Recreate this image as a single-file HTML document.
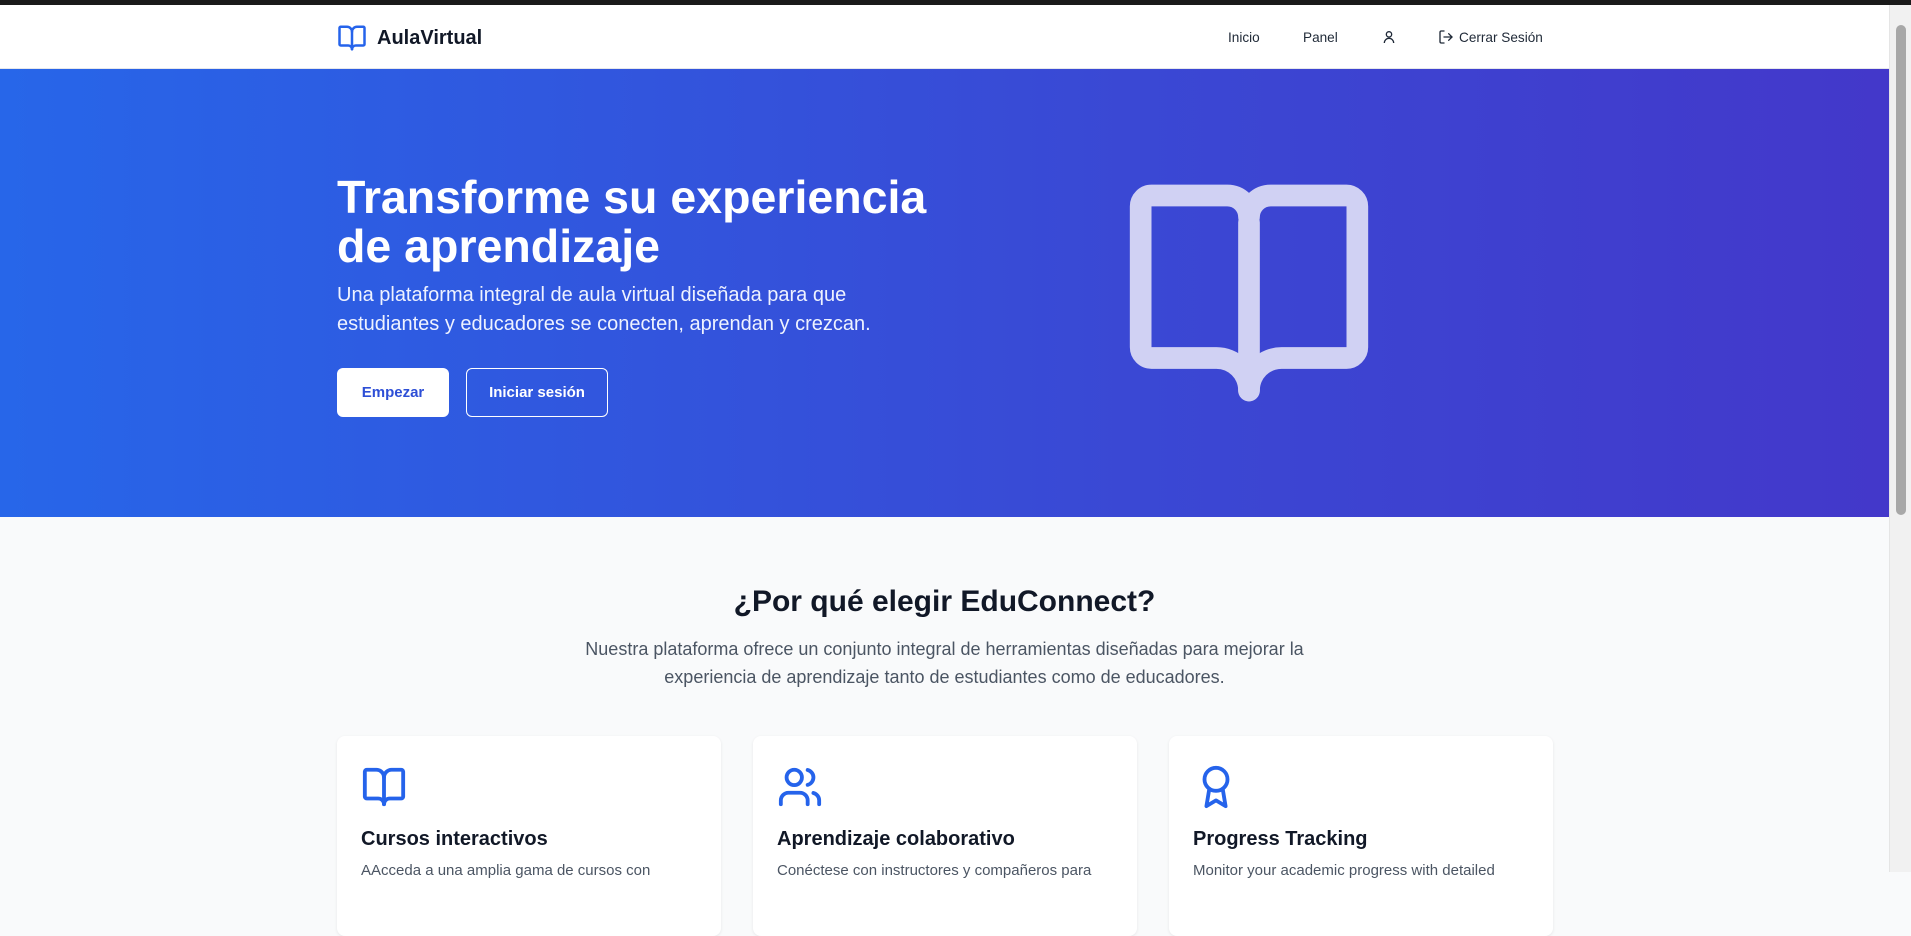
<!DOCTYPE html>
<html><head><meta charset="utf-8"><style>
*{box-sizing:border-box;margin:0;padding:0}
html,body{width:1911px;height:872px;overflow:hidden;font-family:"Liberation Sans",sans-serif;background:#f9fafb}
.topbar{position:absolute;left:0;top:0;width:1911px;height:5px;background:#1a1a1a}
.sb{position:absolute;right:0;top:5px;width:22px;height:867px;background:#f1f1f1;border-left:1px solid #e5e5e5}
.sb div{position:absolute;left:6px;top:20px;width:10px;height:490px;background:#a8a8a8;border-radius:5px}
nav{position:absolute;top:5px;left:0;width:1889px;height:64px;background:#fff;border-bottom:1px solid #e5e7eb}
.logo{position:absolute;left:337px;top:18px;display:flex;align-items:center;gap:10px;font-size:20px;font-weight:bold;color:#111827}
.nl{position:absolute;top:0;height:64px;display:flex;align-items:center;font-size:13.6px;color:#1f2937}
.hero{position:absolute;top:69px;left:0;width:1889px;height:448px;background:linear-gradient(90deg,#2766e9,#3a48d4 60%,#4338ca)}
h1{position:absolute;left:337px;top:104px;width:640px;font-size:46.5px;line-height:49px;color:#fff;font-weight:bold}
.hp{position:absolute;left:337px;top:212px;width:560px;font-size:20px;line-height:29px;color:#eef2ff}
.b1,.b2{position:absolute;top:299px;height:49px;border-radius:6px;font-size:15px;font-weight:bold;display:flex;align-items:center;justify-content:center}
.b1{left:337px;width:112px;background:#fff;color:#2e4fd6}
.b2{left:466px;width:142px;border:1px solid #fff;color:#fff}
.sec{position:absolute;top:517px;left:0;width:1889px;text-align:center}
h2{margin-top:68px;font-size:30px;color:#111827}
.sp{width:720px;margin:16px auto 0;font-size:18px;line-height:28px;color:#4b5563}
.card{position:absolute;top:736px;width:384px;height:200px;background:#fff;border-radius:8px;box-shadow:0 1px 3px rgba(0,0,0,.08)}
.card svg{position:absolute;left:24px;top:28px}
.card h3{position:absolute;left:24px;top:92px;font-size:20px;font-weight:600;color:#111827}
.card p{position:absolute;left:24px;top:126px;font-size:15px;color:#4b5563;width:340px}
</style></head><body>
<div class="topbar"></div>
<nav>
<div class="logo"><svg width="30" height="30" viewBox="0 0 24 24" fill="none" stroke="#2563eb" stroke-width="2" stroke-linecap="round" stroke-linejoin="round"><path d="M12 7v14"/><path d="M3 18a1 1 0 0 1-1-1V4a1 1 0 0 1 1-1h5a4 4 0 0 1 4 4 4 4 0 0 1 4-4h5a1 1 0 0 1 1 1v13a1 1 0 0 1-1 1h-6a3 3 0 0 0-3 3 3 3 0 0 0-3-3z"/></svg>AulaVirtual</div>
<div class="nl" style="left:1228px">Inicio</div>
<div class="nl" style="left:1303px">Panel</div>
<div class="nl" style="left:1381px"><svg width="16" height="16" viewBox="0 0 24 24" fill="none" stroke="#1f2937" stroke-width="2"><circle cx="12" cy="8" r="4"/><path d="M5 21a7 7 0 0 1 14 0"/></svg></div>
<div class="nl" style="left:1438px;gap:5px"><svg width="16" height="16" viewBox="0 0 24 24" fill="none" stroke="#1f2937" stroke-width="2" stroke-linecap="round" stroke-linejoin="round"><path d="M9 21H5a2 2 0 0 1-2-2V5a2 2 0 0 1 2-2h4"/><path d="M16 17l5-5-5-5"/><path d="M21 12H9"/></svg>Cerrar Sesión</div>
</nav>
<div class="hero">
<h1>Transforme su experiencia de aprendizaje</h1>
<div class="hp">Una plataforma integral de aula virtual diseñada para que estudiantes y educadores se conecten, aprendan y crezcan.</div>
<div class="b1">Empezar</div>
<div class="b2">Iniciar sesión</div>
<svg style="position:absolute;left:1119px;top:94px" width="260" height="260" viewBox="0 0 24 24" fill="none" stroke="#d0d1f3" stroke-width="2" stroke-linecap="round" stroke-linejoin="round"><path d="M12 5.5v15.5"/><path d="M3 18a1 1 0 0 1-1-1V4a1 1 0 0 1 1-1h7a2 2 0 0 1 2 2 2 2 0 0 1 2-2h7a1 1 0 0 1 1 1v13a1 1 0 0 1-1 1h-6a3 3 0 0 0-3 3 3 3 0 0 0-3-3z"/></svg>
</div>
<div class="sec">
<h2>¿Por qué elegir EduConnect?</h2>
<div class="sp">Nuestra plataforma ofrece un conjunto integral de herramientas diseñadas para mejorar la experiencia de aprendizaje tanto de estudiantes como de educadores.</div>
</div>
<div class="card" style="left:337px"><svg width="46" height="46" viewBox="0 0 24 24" fill="none" stroke="#2563eb" stroke-width="2" stroke-linecap="round" stroke-linejoin="round"><path d="M12 7v14"/><path d="M3 18a1 1 0 0 1-1-1V4a1 1 0 0 1 1-1h5a4 4 0 0 1 4 4 4 4 0 0 1 4-4h5a1 1 0 0 1 1 1v13a1 1 0 0 1-1 1h-6a3 3 0 0 0-3 3 3 3 0 0 0-3-3z"/></svg><h3>Cursos interactivos</h3><p>AAcceda a una amplia gama de cursos con</p></div>
<div class="card" style="left:753px"><svg width="46" height="46" viewBox="0 0 24 24" fill="none" stroke="#2563eb" stroke-width="2" stroke-linecap="round" stroke-linejoin="round"><path d="M16 21v-2a4 4 0 0 0-4-4H6a4 4 0 0 0-4 4v2"/><circle cx="9" cy="7" r="4"/><path d="M22 21v-2a4 4 0 0 0-3-3.87"/><path d="M16 3.13a4 4 0 0 1 0 7.75"/></svg><h3>Aprendizaje colaborativo</h3><p>Conéctese con instructores y compañeros para</p></div>
<div class="card" style="left:1169px"><svg width="46" height="46" viewBox="0 0 24 24" fill="none" stroke="#2563eb" stroke-width="2" stroke-linecap="round" stroke-linejoin="round"><circle cx="12" cy="8" r="6"/><path d="M15.48 12.89L17 22l-5-3-5 3 1.52-9.11"/></svg><h3>Progress Tracking</h3><p>Monitor your academic progress with detailed</p></div>
<div class="sb"><div></div></div>
</body></html>
